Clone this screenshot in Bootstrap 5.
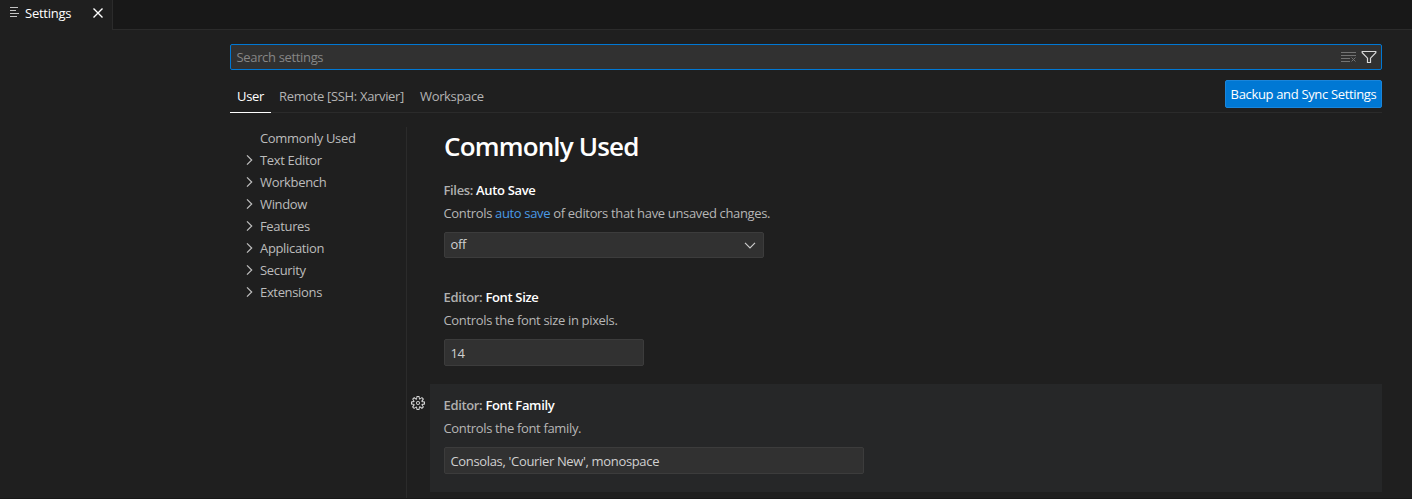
<!DOCTYPE html>
<html lang="en">
<head>
<meta charset="utf-8">
<title>Settings</title>
<link href="https://cdn.jsdelivr.net/npm/bootstrap@5.3.0/dist/css/bootstrap.min.css" rel="stylesheet">
<style>
body{background:#1f1f1f;color:#ccc;font:13px/18px "Segoe UI","Open Sans","Noto Sans",sans-serif;letter-spacing:-.34px;height:499px;overflow:hidden;border-bottom:1px solid #181818}
svg{display:block;flex:none}
.editor-tabs{height:30px;background:#181818}
.editor-tab{width:113px;background:#1f1f1f;border-right:1px solid #2b2b2b;color:#fff;padding:0 8px 4px 9px}
.tab-label{margin-left:4px;letter-spacing:-.25px}
.tabs-rest{border-bottom:1px solid #2b2b2b}
.settings-page{padding:14px 30px 0 230px}
.search-box{height:26px;background:#313131;border:1px solid #0078d4;border-radius:2px;padding:0 4px 0 5.5px;color:#868686}
.scope-bar{height:43px;border-bottom:1px solid #2b2b2b}
.scope-nav{margin-bottom:-1px}
.scope-link{color:#b4b4b4;height:33px;padding:7px 0 0 8px;border-bottom:1px solid transparent}
.scope-link.active{width:41px;padding-left:7px;color:#fff;border-color:#fff}
.scope-remote{width:141px}
.sync-btn{height:28px;background:#0078d4;color:#fff;border:1px solid #1a85da;border-radius:2px;padding:0;width:157px;font:inherit;letter-spacing:inherit;margin-bottom:4px}
.toc{width:177px;height:372px;margin-top:14px;border-right:1px solid #2b2b2b;color:#bcbcbc}
.toc-row{height:22px;padding-left:11px}
.toc-row span{padding-left:3px}
.toc-icon{width:16px}
.group-title{font-size:26px;line-height:34px;font-weight:600;color:#fff;margin:16px 0 6px 37px;letter-spacing:-.83px}
.setting{height:108px;padding:12px 0 0 14px;margin-left:23px}
.setting.first-item{height:107px}
.setting.focused{background:#262728}
.setting-title{font-weight:600;color:#b0b0b0;margin:0 0 5px -.5px}
.setting-title b{font-weight:600;color:#fff}
.setting-desc{color:#b6b6b6;margin:0 0 10px -.5px}
.setting-desc a{color:#4a9ae4;text-decoration:none}
.field{height:27px;background:#313131;border:1px solid #3c3c3c;border-radius:2px;padding:0 5.5px;color:#d0d0d0}
.field-select{width:320px;height:26px}
.field-select span{margin-top:-2px}
.field-number{width:200px}
.field-text{width:420px}
.gear{left:-20px;top:11px}
</style>
</head>
<body>
<header class="editor-tabs d-flex">
  <div class="editor-tab d-flex align-items-center">
    <svg width="12" height="12" viewBox="0 0 12 12" fill="none" stroke="#c4c4c4" stroke-width="1.2"><path d="M1 .5h8M1 3.500h6M1 6.500h9M1 9.500h7"/></svg>
    <span class="tab-label">Settings</span>
    <svg class="ms-auto" width="12" height="12" viewBox="0 0 12 12" fill="none" stroke="#fff" stroke-width="1.4"><path d="M1.500 1.500l9 9M10.500 1.500l-9 9"/></svg>
  </div>
  <div class="tabs-rest flex-grow-1"></div>
</header>
<main class="settings-page">
  <div class="search-box d-flex align-items-center">
    <span class="me-auto">Search settings</span>
    <svg width="16" height="16" viewBox="0 0 16 16" fill="none" stroke="#737373"><path d="M0 3.5h15M0 6.5h15M0 9.5h9M0 12.5h9M10.5 8.5l4 4M14.500 8.500l-4 4"/></svg>
    <svg class="ms-1" width="16" height="16" viewBox="0 0 16 16" fill="none" stroke="#d8d8d8" stroke-width="1.2"><path d="M1.200 2.500h13.600v1.200L9.500 9.200v4.300h-3V9.200L1.200 3.700z"/></svg>
  </div>
  <div class="scope-bar d-flex align-items-end justify-content-between">
    <nav class="scope-nav d-flex">
      <div class="scope-link active">User</div>
      <div class="scope-link scope-remote">Remote [SSH: Xarvier]</div>
      <div class="scope-link">Workspace</div>
    </nav>
    <button class="btn sync-btn">Backup and Sync Settings</button>
  </div>
  <div class="d-flex">
    <aside class="toc flex-shrink-0">
      <div class="toc-row d-flex align-items-center"><i class="toc-icon"></i><span>Commonly Used</span></div>
      <div class="toc-row d-flex align-items-center"><svg width="16" height="16" viewBox="0 0 16 16" fill="none" stroke="#c0c0c0" stroke-width="1.2"><path d="M6 3.300l4.700 4.700L6 12.700"/></svg><span>Text Editor</span></div>
      <div class="toc-row d-flex align-items-center"><svg width="16" height="16" viewBox="0 0 16 16" fill="none" stroke="#c0c0c0" stroke-width="1.2"><path d="M6 3.300l4.700 4.700L6 12.700"/></svg><span>Workbench</span></div>
      <div class="toc-row d-flex align-items-center"><svg width="16" height="16" viewBox="0 0 16 16" fill="none" stroke="#c0c0c0" stroke-width="1.2"><path d="M6 3.300l4.700 4.700L6 12.700"/></svg><span>Window</span></div>
      <div class="toc-row d-flex align-items-center"><svg width="16" height="16" viewBox="0 0 16 16" fill="none" stroke="#c0c0c0" stroke-width="1.2"><path d="M6 3.300l4.700 4.700L6 12.700"/></svg><span>Features</span></div>
      <div class="toc-row d-flex align-items-center"><svg width="16" height="16" viewBox="0 0 16 16" fill="none" stroke="#c0c0c0" stroke-width="1.2"><path d="M6 3.300l4.700 4.700L6 12.700"/></svg><span>Application</span></div>
      <div class="toc-row d-flex align-items-center"><svg width="16" height="16" viewBox="0 0 16 16" fill="none" stroke="#c0c0c0" stroke-width="1.2"><path d="M6 3.300l4.700 4.700L6 12.700"/></svg><span>Security</span></div>
      <div class="toc-row d-flex align-items-center"><svg width="16" height="16" viewBox="0 0 16 16" fill="none" stroke="#c0c0c0" stroke-width="1.2"><path d="M6 3.300l4.700 4.700L6 12.700"/></svg><span>Extensions</span></div>
    </aside>
    <section class="flex-grow-1">
      <h1 class="group-title">Commonly Used</h1>
      <div class="setting first-item">
        <div class="setting-title">Files: <b>Auto Save</b></div>
        <div class="setting-desc">Controls <a href="#">auto save</a> of editors that have unsaved changes.</div>
        <div class="field field-select d-flex align-items-center justify-content-between"><span>off</span>
          <svg width="16" height="16" viewBox="0 0 16 16" fill="none" stroke="#ccc" stroke-width="1.2"><path d="M3 5.800l5 5 5-5"/></svg></div>
      </div>
      <div class="setting">
        <div class="setting-title">Editor: <b>Font Size</b></div>
        <div class="setting-desc">Controls the font size in pixels.</div>
        <div class="field field-number d-flex align-items-center">14</div>
      </div>
      <div class="setting focused position-relative">
        <svg class="gear position-absolute" width="16" height="16" viewBox="0 0 16 16" fill="#d4d4d4" fill-rule="evenodd"><path d="M9.100 4.400L8.600 2H7.400l-.5 2.400-.7.300-2-1.300-.9.800 1.300 2-.2.700-2.400.5v1.200l2.400.5.3.8-1.300 2 .8.8 2-1.300.8.300.4 2.300h1.200l.5-2.400.8-.3 2 1.300.8-.8-1.300-2 .3-.8 2.300-.4V7.400l-2.400-.5-.3-.8 1.300-2-.8-.8-2 1.300-.7-.2zM9.400 1l.5 2.400L12 2.100l2 2-1.400 2.100 2.400.4v2.800l-2.400.5L14 12l-2 2-2.100-1.400-.5 2.400H6.600l-.5-2.400L4 13.900l-2-2 1.400-2.100L1 9.400V6.600l2.400-.5L2.100 4l2-2 2.100 1.400.4-2.400h2.800zm.6 7c0 1.100-.9 2-2 2s-2-.9-2-2 .9-2 2-2 2 .9 2 2zM8 9c.6 0 1-.4 1-1s-.4-1-1-1-1 .4-1 1 .4 1 1 1z"/></svg>
        <div class="setting-title">Editor: <b>Font Family</b></div>
        <div class="setting-desc">Controls the font family.</div>
        <div class="field field-text d-flex align-items-center">Consolas, 'Courier New', monospace</div>
      </div>
    </section>
  </div>
</main>
<script src="https://cdn.jsdelivr.net/npm/bootstrap@5.3.0/dist/js/bootstrap.bundle.min.js"></script>
</body>
</html>
